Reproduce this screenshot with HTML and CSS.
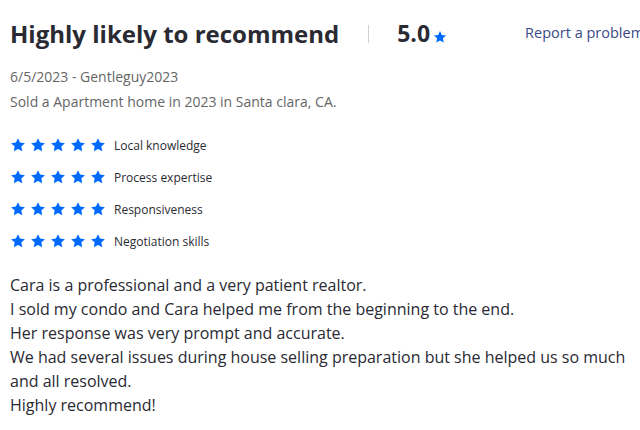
FILE: index.html
```html
<!DOCTYPE html>
<html>
<head>
<meta charset="utf-8">
<link rel="stylesheet" href="styles.css">
</head>
<body>
<div class="review">
  <div class="header">
    <h2 class="title">Highly likely to recommend</h2>
    <span class="sep"></span>
    <span class="score">5.0</span>
    <svg class="star-sm" viewBox="0 0 24 24"><path d="M12 1.8l3.1 6.6 7.2.9-5.3 5 1.4 7.1L12 17.9l-6.4 3.5 1.4-7.1-5.3-5 7.2-.9z"/></svg>
    <a class="report">Report a problem</a>
  </div>
  <div class="meta meta-first">6/5/2023 - Gentleguy2023</div>
  <div class="meta">Sold a Apartment home in 2023 in Santa clara, CA.</div>
  <ul class="ratings">
    <li><span class="stars"><svg viewBox="0 0 24 24"><path d="M12 1.8l3.1 6.6 7.2.9-5.3 5 1.4 7.1L12 17.9l-6.4 3.5 1.4-7.1-5.3-5 7.2-.9z"/></svg><svg viewBox="0 0 24 24"><path d="M12 1.8l3.1 6.6 7.2.9-5.3 5 1.4 7.1L12 17.9l-6.4 3.5 1.4-7.1-5.3-5 7.2-.9z"/></svg><svg viewBox="0 0 24 24"><path d="M12 1.8l3.1 6.6 7.2.9-5.3 5 1.4 7.1L12 17.9l-6.4 3.5 1.4-7.1-5.3-5 7.2-.9z"/></svg><svg viewBox="0 0 24 24"><path d="M12 1.8l3.1 6.6 7.2.9-5.3 5 1.4 7.1L12 17.9l-6.4 3.5 1.4-7.1-5.3-5 7.2-.9z"/></svg><svg viewBox="0 0 24 24"><path d="M12 1.8l3.1 6.6 7.2.9-5.3 5 1.4 7.1L12 17.9l-6.4 3.5 1.4-7.1-5.3-5 7.2-.9z"/></svg></span><span class="label">Local knowledge</span></li>
    <li><span class="stars"><svg viewBox="0 0 24 24"><path d="M12 1.8l3.1 6.6 7.2.9-5.3 5 1.4 7.1L12 17.9l-6.4 3.5 1.4-7.1-5.3-5 7.2-.9z"/></svg><svg viewBox="0 0 24 24"><path d="M12 1.8l3.1 6.6 7.2.9-5.3 5 1.4 7.1L12 17.9l-6.4 3.5 1.4-7.1-5.3-5 7.2-.9z"/></svg><svg viewBox="0 0 24 24"><path d="M12 1.8l3.1 6.6 7.2.9-5.3 5 1.4 7.1L12 17.9l-6.4 3.5 1.4-7.1-5.3-5 7.2-.9z"/></svg><svg viewBox="0 0 24 24"><path d="M12 1.8l3.1 6.6 7.2.9-5.3 5 1.4 7.1L12 17.9l-6.4 3.5 1.4-7.1-5.3-5 7.2-.9z"/></svg><svg viewBox="0 0 24 24"><path d="M12 1.8l3.1 6.6 7.2.9-5.3 5 1.4 7.1L12 17.9l-6.4 3.5 1.4-7.1-5.3-5 7.2-.9z"/></svg></span><span class="label">Process expertise</span></li>
    <li><span class="stars"><svg viewBox="0 0 24 24"><path d="M12 1.8l3.1 6.6 7.2.9-5.3 5 1.4 7.1L12 17.9l-6.4 3.5 1.4-7.1-5.3-5 7.2-.9z"/></svg><svg viewBox="0 0 24 24"><path d="M12 1.8l3.1 6.6 7.2.9-5.3 5 1.4 7.1L12 17.9l-6.4 3.5 1.4-7.1-5.3-5 7.2-.9z"/></svg><svg viewBox="0 0 24 24"><path d="M12 1.8l3.1 6.6 7.2.9-5.3 5 1.4 7.1L12 17.9l-6.4 3.5 1.4-7.1-5.3-5 7.2-.9z"/></svg><svg viewBox="0 0 24 24"><path d="M12 1.8l3.1 6.6 7.2.9-5.3 5 1.4 7.1L12 17.9l-6.4 3.5 1.4-7.1-5.3-5 7.2-.9z"/></svg><svg viewBox="0 0 24 24"><path d="M12 1.8l3.1 6.6 7.2.9-5.3 5 1.4 7.1L12 17.9l-6.4 3.5 1.4-7.1-5.3-5 7.2-.9z"/></svg></span><span class="label">Responsiveness</span></li>
    <li><span class="stars"><svg viewBox="0 0 24 24"><path d="M12 1.8l3.1 6.6 7.2.9-5.3 5 1.4 7.1L12 17.9l-6.4 3.5 1.4-7.1-5.3-5 7.2-.9z"/></svg><svg viewBox="0 0 24 24"><path d="M12 1.8l3.1 6.6 7.2.9-5.3 5 1.4 7.1L12 17.9l-6.4 3.5 1.4-7.1-5.3-5 7.2-.9z"/></svg><svg viewBox="0 0 24 24"><path d="M12 1.8l3.1 6.6 7.2.9-5.3 5 1.4 7.1L12 17.9l-6.4 3.5 1.4-7.1-5.3-5 7.2-.9z"/></svg><svg viewBox="0 0 24 24"><path d="M12 1.8l3.1 6.6 7.2.9-5.3 5 1.4 7.1L12 17.9l-6.4 3.5 1.4-7.1-5.3-5 7.2-.9z"/></svg><svg viewBox="0 0 24 24"><path d="M12 1.8l3.1 6.6 7.2.9-5.3 5 1.4 7.1L12 17.9l-6.4 3.5 1.4-7.1-5.3-5 7.2-.9z"/></svg></span><span class="label">Negotiation skills</span></li>
  </ul>
  <p class="body">Cara is a professional and a very patient realtor.<br>I sold my condo and Cara helped me from the beginning to the end.<br>Her response was very prompt and accurate.<br>We had several issues during house selling preparation but she helped us so much and all resolved.<br>Highly recommend!</p>
</div>
</body>
</html>
```

FILE: styles.css
```css
html, body {
  margin: 0;
  padding: 0;
  background: #fff;
  overflow: hidden;
}
body {
  font-family: "Open Sans", "Liberation Sans", sans-serif;
  color: #2a2a33;
  width: 640px;
}
.review {
  padding: 16px 0 0 10px;
}
.header {
  display: flex;
  align-items: center;
  height: 34px;
  white-space: nowrap;
}
.header > * {
  flex-shrink: 0;
}
.title {
  margin: 0;
  font-size: 24px;
  font-weight: 700;
  color: #2a2a33;
}
.sep {
  width: 1px;
  height: 18px;
  background: #d1d1d5;
  margin: 2px 0 0 29px;
}
.score {
  margin-left: 28px;
  font-size: 23px;
  font-weight: 700;
}
.star-sm {
  width: 14px;
  height: 14px;
  fill: #006aff;
  margin: 8px 0 0 3px;
}
.report {
  margin-left: 78px;
  font-size: 14.5px;
  color: #3b4a87;
  margin-top: -2px;
}
.meta {
  font-size: 14px;
  color: #666;
  line-height: 25px;
}
.meta-first {
  margin-top: 14px;
}
.ratings {
  list-style: none;
  margin: 15px 0 0;
  padding: 0;
}
.ratings li {
  display: flex;
  align-items: center;
  height: 32px;
}
.stars {
  display: flex;
  gap: 4px;
}
.stars svg {
  width: 16px;
  height: 16px;
  fill: #006aff;
}
.label {
  margin-left: 8px;
  font-size: 12px;
  color: #2a2a33;
}
.body {
  margin: 16px 0 0;
  font-size: 16px;
  line-height: 24px;
  color: #2a2a33;
  padding-right: 10px;
}
```
